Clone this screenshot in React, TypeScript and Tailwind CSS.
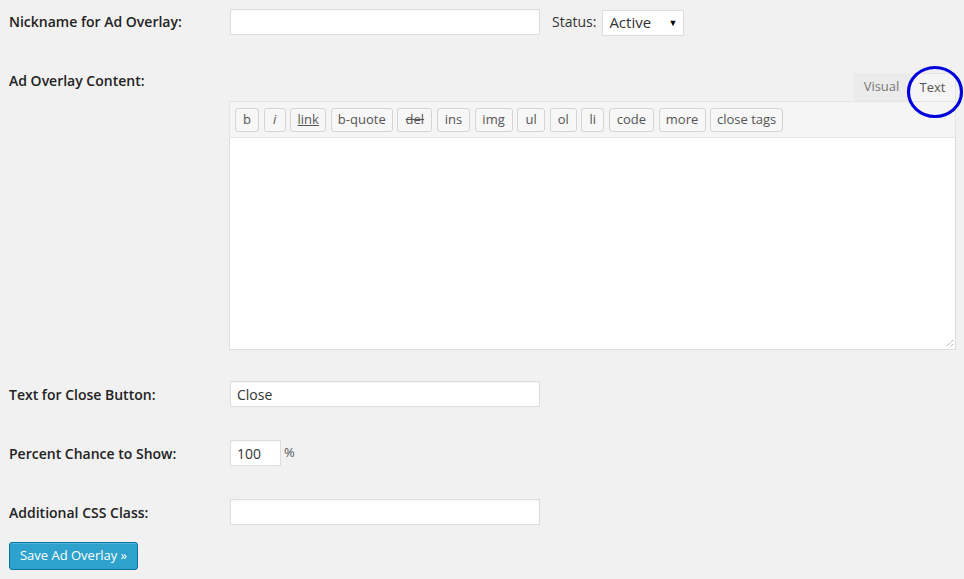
const tools: [string, number, string?][] = [
  ["b", 24],
  ["i", 22, "italic"],
  ["link", 36, "underline"],
  ["b-quote", 62],
  ["del", 35, "line-through"],
  ["ins", 33],
  ["img", 38],
  ["ul", 28],
  ["ol", 27],
  ["li", 23],
  ["code", 45],
  ["more", 47],
  ["close tags", 73],
];

function Label({ children }: { children: React.ReactNode }) {
  return <div className="w-[230px] shrink-0 pl-[9px] text-[14px] font-semibold text-[#222]">{children}</div>;
}

function TextInput({ value = "", width }: { value?: string; width: string }) {
  return (
    <div className={`${width} h-[26px] bg-white border border-[#ddd] flex items-center px-[6px] text-[14px] text-[#333] shadow-[inset_0_1px_2px_rgba(0,0,0,0.04)]`}>
      {value}
    </div>
  );
}

export default function App() {
  return (
    <div className="relative w-[964px] h-[579px] overflow-hidden bg-[#f1f1f1] font-['Open_Sans',sans-serif]">
      {/* nickname + status */}
      <div className="flex items-center h-[27px] mt-[8px]">
        <Label>Nickname for Ad Overlay:</Label>
        <TextInput width="w-[310px]" />
        <span className="ml-[12px] text-[14px] text-[#333]">Status:</span>
        <div className="ml-[6px] mt-[2px] w-[82px] h-[26px] bg-white border border-[#ddd] flex items-center justify-between pl-[6px] pr-[6px] text-[15px] text-[#333]">
          <span>Active</span>
          <span className="text-[9px] text-black">▼</span>
        </div>
      </div>

      {/* content editor */}
      <div className="flex mt-[38px]">
        <div className="-mt-[3px]">
          <Label>Ad Overlay Content:</Label>
        </div>
        <div className="w-[727px] -ml-[1px] flex flex-col">
          <div className="flex justify-end h-[28px]">
            <div className="w-[55px] bg-[#ebebeb] text-[13px] text-[#777] flex items-center justify-center">Visual</div>
            <div className="w-[47px] bg-[#f5f5f5] border-t border-l border-r border-[#e5e5e5] text-[13px] text-[#555] flex items-center justify-center">Text</div>
          </div>
          <div className="bg-[#f5f5f5] border border-[#e5e5e5] h-[37px] flex items-center gap-[4.6px] pl-[5px]">
            {tools.map(([t, w, deco]) => (
              <div
                key={t}
                style={{ width: w }}
                className={`h-[24px] shrink-0 rounded-[3px] border border-[#d4d4d4] bg-[#f7f7f7] flex items-center justify-center text-[13px] text-[#555] ${
                  deco === "italic" ? "italic" : deco === "underline" ? "underline" : deco === "line-through" ? "line-through" : ""
                }`}
              >
                {t}
              </div>
            ))}
          </div>
          <div className="relative h-[212px] bg-white border-x border-b border-[#ddd]">
            <svg className="absolute right-[1px] bottom-[1px]" width="10" height="10" viewBox="0 0 10 10">
              <path d="M9 2 L2 9 M9 6 L6 9" stroke="#888" strokeWidth="1" strokeDasharray="1 1" />
            </svg>
          </div>
        </div>
      </div>

      {/* close button text */}
      <div className="flex items-center h-[26px] mt-[31px]">
        <Label>Text for Close Button:</Label>
        <TextInput value="Close" width="w-[310px]" />
      </div>

      {/* percent */}
      <div className="flex items-center h-[26px] mt-[33px]">
        <Label>Percent Chance to Show:</Label>
        <TextInput value="100" width="w-[51px]" />
        <span className="ml-[3px] text-[13px] text-[#555]">%</span>
      </div>

      {/* css class */}
      <div className="flex items-center h-[26px] mt-[33px]">
        <Label>Additional CSS Class:</Label>
        <TextInput width="w-[310px]" />
      </div>

      <div className="pl-[9px] mt-[17px]">
        <div className="w-[129px] h-[28px] rounded-[3px] bg-[#2ea2cc] border border-[#0074a2] shadow-[inset_0_1px_0_rgba(120,200,230,0.5)] flex items-center justify-center text-[13px] text-white">
          Save Ad Overlay »
        </div>
      </div>

      {/* annotation circle */}
      <svg className="absolute left-[905px] top-[64px]" width="60" height="56" viewBox="0 0 60 56">
        <ellipse cx="30" cy="28" rx="26.5" ry="24.5" fill="none" stroke="#0000dd" strokeWidth="3.2" />
      </svg>
    </div>
  );
}
